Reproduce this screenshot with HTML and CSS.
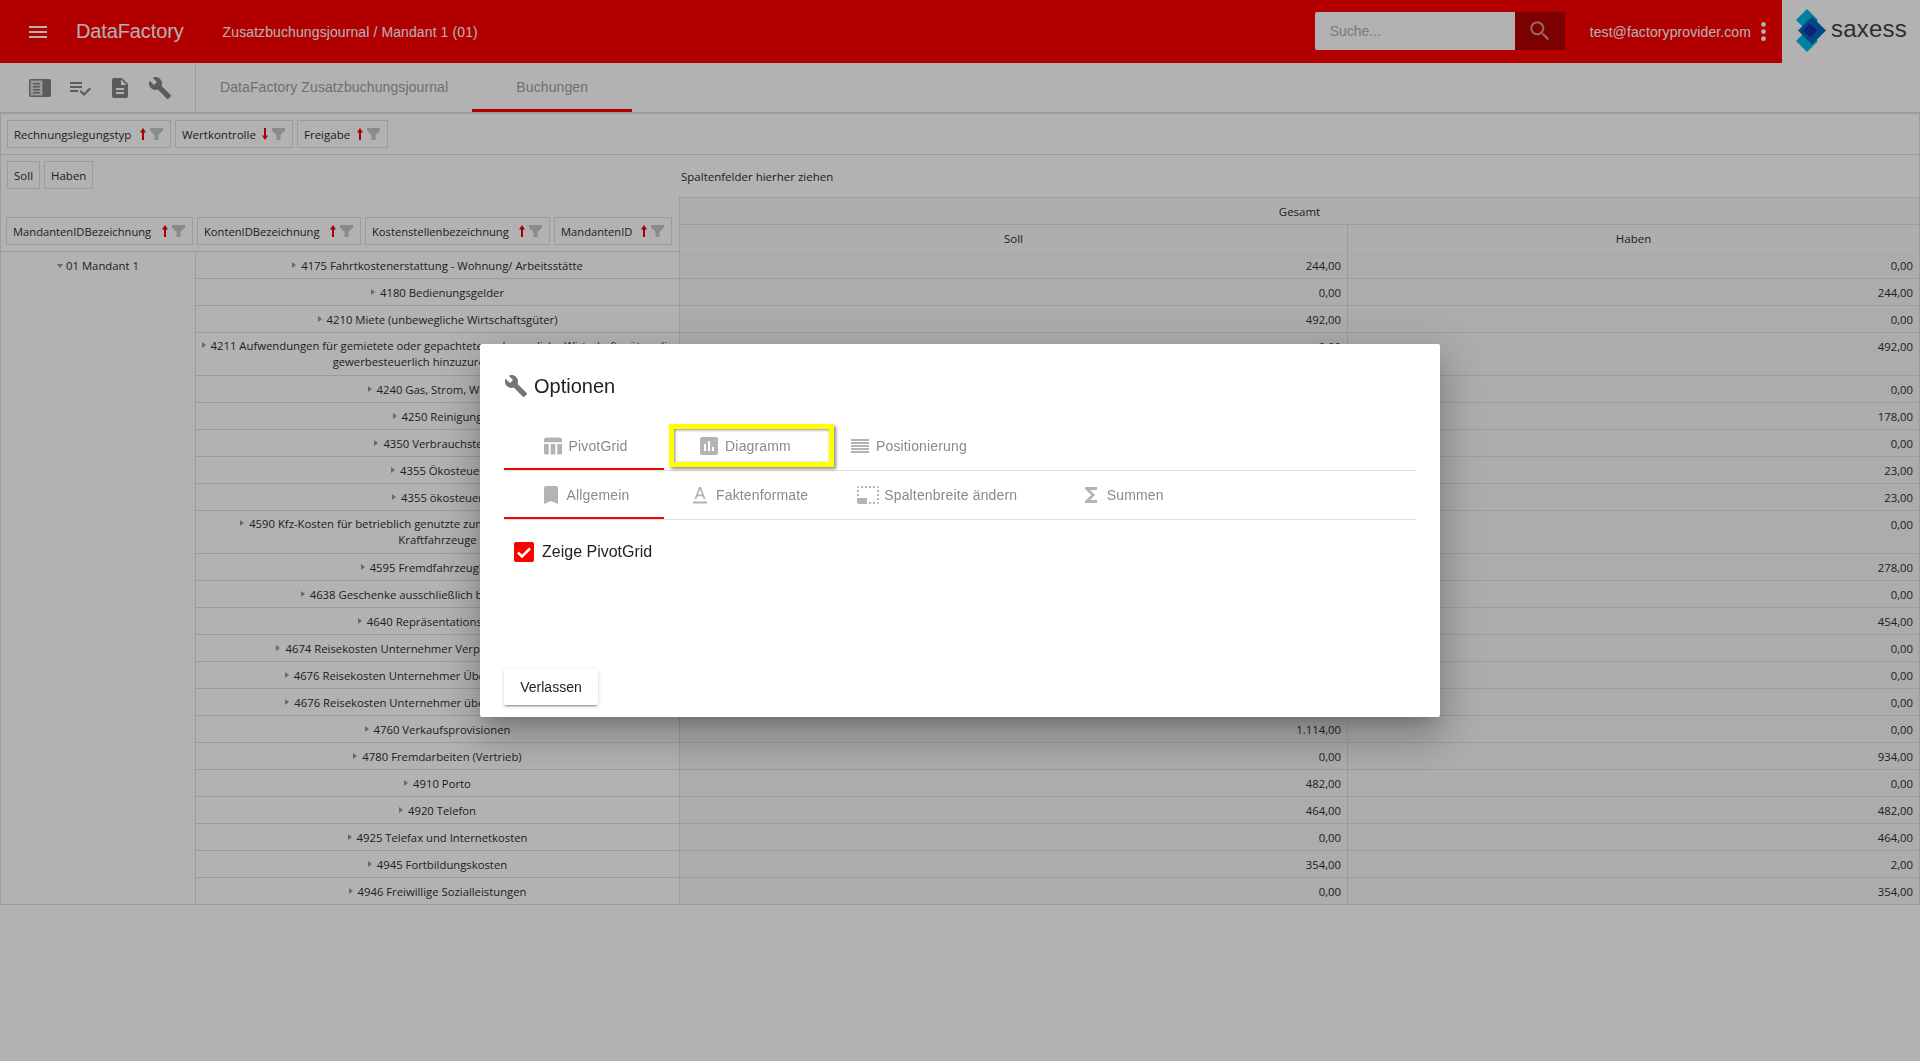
FILE: index.html
```html
<!DOCTYPE html>
<html lang="de">
<head>
<meta charset="utf-8">
<title>DataFactory</title>
<link rel="stylesheet" href="styles.css">
</head>
<body>
<svg class="defs" width="0" height="0" aria-hidden="true">
  <symbol id="up" viewBox="0 0 6 12"><path d="M3 0L6 4.500H4V12H2V4.500H0z"/></symbol>
  <symbol id="down" viewBox="0 0 6 12"><path d="M3 12L6 7.500H4V0H2v7.500H0z"/></symbol>
  <symbol id="funnel" viewBox="0 0 13 12"><path d="M0 0h13v2.500L8.500 7v5h-4V7L0 2.500z"/></symbol>
  <symbol id="wrench" viewBox="0 0 24 24"><path d="M22.7 19l-9.1-9.1c.9-2.3.4-5-1.5-6.9-2-2-5-2.4-7.4-1.3L9 6 6 9 1.6 4.7C.4 7.1.9 10.1 2.900 12.100c1.900 1.900 4.600 2.400 6.900 1.500l9.100 9.100c.4.4 1 .4 1.400 0l2.300-2.300c.5-.4.5-1.100.1-1.400z"/></symbol>
</svg>

<header class="topbar">
  <svg class="menu-icon" viewBox="3 6 18 12"><path d="M3 18h18v-2H3v2zm0-5h18v-2H3v2zm0-7v2h18V6H3z"/></svg>
  <span class="brand">DataFactory</span>
  <span class="crumb">Zusatzbuchungsjournal / Mandant 1 (01)</span>
  <div class="search">
    <span class="search-input">Suche...</span>
    <span class="search-btn"><svg viewBox="0 0 24 24"><path d="M15.5 14h-.79l-.28-.27A6.47 6.47 0 0 0 16 9.5 6.5 6.5 0 1 0 9.5 16c1.61 0 3.09-.59 4.23-1.57l.27.28v.79l5 4.99L20.49 19l-4.99-5zm-6 0C7.01 14 5 11.99 5 9.5S7.01 5 9.5 5 14 7.01 14 9.5 11.99 14 9.5 14z"/></svg></span>
  </div>
  <span class="user">test@factoryprovider.com</span>
  <svg class="more-icon" viewBox="0 0 4 16"><circle cx="2" cy="2" r="2"/><circle cx="2" cy="8" r="2"/><circle cx="2" cy="14" r="2"/></svg>
  <div class="logo">
    <svg class="logo-mark" viewBox="0 0 30 43">
      <path class="lm-a" d="M11 0l11 11-11 11L0 11z"/>
      <path class="lm-a" d="M11 21l11 11-11 11L0 32z"/>
      <path class="lm-b" d="M16 7.500l14 14-14 14L2 21.500z"/>
      <path class="lm-c" d="M14 14.500l7 7-7 7-7-7z"/>
    </svg>
    <span class="logo-text">saxess</span>
  </div>
</header>

<nav class="toolbar">
  <div class="tool-icons">
    <svg class="ti ti-panel" viewBox="0 0 22 18"><rect width="22" height="18" rx="2"/><rect class="ti-light" x="1.500" y="1.500" width="12" height="15"/><path d="M4 4h7v1.500H4zM4 7h7v1.500H4zM4 10h7v1.500H4zM4 13h7v1.500H4z"/></svg>
    <svg class="ti ti-check" viewBox="2 5 22 16"><path d="M14 10H2v2h12v-2zm0-4H2v2h12V6zM2 16h8v-2H2v2zm19.500-4.500L23 13l-6.990 7-4.510-4.500L13 14l3.010 3 5.490-5.500z"/></svg>
    <svg class="ti ti-doc" viewBox="4 2 16 20"><path d="M14 2H6c-1.100 0-1.990.9-1.990 2L4 20c0 1.100.89 2 1.990 2H18c1.100 0 2-.9 2-2V8l-6-6zm2 16H8v-2h8v2zm0-4H8v-2h8v2zm-3-5V3.500L18.500 9H13z"/></svg>
    <svg class="ti ti-wrench"><use href="#wrench"/></svg>
  </div>
  <div class="page-tabs">
    <span class="page-tab">DataFactory Zusatzbuchungsjournal</span>
    <span class="page-tab is-active">Buchungen</span>
  </div>
</nav>

<main class="pivot">
  <div class="filter-row">
    <span class="chip">Rechnungslegungstyp<svg class="arr"><use href="#up"/></svg><svg class="fun"><use href="#funnel"/></svg></span>
    <span class="chip">Wertkontrolle<svg class="arr"><use href="#down"/></svg><svg class="fun"><use href="#funnel"/></svg></span>
    <span class="chip">Freigabe<svg class="arr"><use href="#up"/></svg><svg class="fun"><use href="#funnel"/></svg></span>
  </div>
  <div class="head">
    <div class="head-left">
      <div class="data-chips">
        <span class="chip">Soll</span>
        <span class="chip">Haben</span>
      </div>
      <div class="row-chips">
        <span class="chip">MandantenIDBezeichnung<svg class="arr"><use href="#up"/></svg><svg class="fun"><use href="#funnel"/></svg></span>
        <span class="chip">KontenIDBezeichnung<svg class="arr"><use href="#up"/></svg><svg class="fun"><use href="#funnel"/></svg></span>
        <span class="chip">Kostenstellenbezeichnung<svg class="arr"><use href="#up"/></svg><svg class="fun"><use href="#funnel"/></svg></span>
        <span class="chip">MandantenID<svg class="arr"><use href="#up"/></svg><svg class="fun"><use href="#funnel"/></svg></span>
      </div>
    </div>
    <div class="head-right">
      <div class="drop-hint">Spaltenfelder hierher ziehen</div>
      <div class="col-total">Gesamt</div>
      <div class="col-fields"><div class="col-soll">Soll</div><div class="col-haben">Haben</div></div>
    </div>
  </div>
  <div class="grid">
    <div class="mandant"><i class="tri-down"></i>01 Mandant 1</div>

    <div class="acc"><i class="tri"></i>4175 Fahrtkostenerstattung - Wohnung/ Arbeitsstätte</div><div class="num">244,00</div><div class="num">0,00</div>
    <div class="acc"><i class="tri"></i>4180 Bedienungsgelder</div><div class="num">0,00</div><div class="num">244,00</div>
    <div class="acc"><i class="tri"></i>4210 Miete (unbewegliche Wirtschaftsgüter)</div><div class="num">492,00</div><div class="num">0,00</div>
    <div class="acc is-tall"><i class="tri"></i>4211 Aufwendungen für gemietete oder gepachtete, unbewegliche Wirtschaftsgüter, die gewerbesteuerlich hinzuzurechnen sind</div><div class="num">0,00</div><div class="num">492,00</div>
    <div class="acc"><i class="tri"></i>4240 Gas, Strom, Wasser</div><div class="num">178,00</div><div class="num">0,00</div>
    <div class="acc"><i class="tri"></i>4250 Reinigung</div><div class="num">0,00</div><div class="num">178,00</div>
    <div class="acc"><i class="tri"></i>4350 Verbrauchsteuer</div><div class="num">23,00</div><div class="num">0,00</div>
    <div class="acc"><i class="tri"></i>4355 Ökosteuer</div><div class="num">0,00</div><div class="num">23,00</div>
    <div class="acc"><i class="tri"></i>4355 ökosteuer</div><div class="num">0,00</div><div class="num">23,00</div>
    <div class="acc is-tall"><i class="tri"></i>4590 Kfz-Kosten für betrieblich genutzte zum Betriebsvermögen gehörige<br>Kraftfahrzeuge</div><div class="num">278,00</div><div class="num">0,00</div>
    <div class="acc"><i class="tri"></i>4595 Fremdfahrzeugkosten</div><div class="num">0,00</div><div class="num">278,00</div>
    <div class="acc"><i class="tri"></i>4638 Geschenke ausschließlich betrieblich genutzt</div><div class="num">454,00</div><div class="num">0,00</div>
    <div class="acc"><i class="tri"></i>4640 Repräsentationskosten</div><div class="num">0,00</div><div class="num">454,00</div>
    <div class="acc"><i class="tri"></i>4674 Reisekosten Unternehmer Verpflegungsmehraufwand</div><div class="num">0,00</div><div class="num">0,00</div>
    <div class="acc"><i class="tri"></i>4676 Reisekosten Unternehmer Übernachtungsaufwand</div><div class="num">0,00</div><div class="num">0,00</div>
    <div class="acc"><i class="tri"></i>4676 Reisekosten Unternehmer übernachtungsaufwand</div><div class="num">0,00</div><div class="num">0,00</div>
    <div class="acc"><i class="tri"></i>4760 Verkaufsprovisionen</div><div class="num">1.114,00</div><div class="num">0,00</div>
    <div class="acc"><i class="tri"></i>4780 Fremdarbeiten (Vertrieb)</div><div class="num">0,00</div><div class="num">934,00</div>
    <div class="acc"><i class="tri"></i>4910 Porto</div><div class="num">482,00</div><div class="num">0,00</div>
    <div class="acc"><i class="tri"></i>4920 Telefon</div><div class="num">464,00</div><div class="num">482,00</div>
    <div class="acc"><i class="tri"></i>4925 Telefax und Internetkosten</div><div class="num">0,00</div><div class="num">464,00</div>
    <div class="acc"><i class="tri"></i>4945 Fortbildungskosten</div><div class="num">354,00</div><div class="num">2,00</div>
    <div class="acc"><i class="tri"></i>4946 Freiwillige Sozialleistungen</div><div class="num">0,00</div><div class="num">354,00</div>
  </div>
</main>

<div class="backdrop">
  <section class="dialog">
    <h2 class="dialog-title"><svg class="title-icon"><use href="#wrench"/></svg>Optionen</h2>
    <div class="tabs">
      <div class="tab is-on">
        <svg class="tab-icon" viewBox="0 0 19 18"><path d="M0 3a3 3 0 0 1 3-3h13a3 3 0 0 1 3 3v2H0zM0 7h5v11H2a2 2 0 0 1-2-2zM7 7h5v11H7zM14 7h5v9a2 2 0 0 1-2 2h-3z"/></svg>PivotGrid
      </div>
      <div class="tab">
        <svg class="tab-icon" viewBox="3 3 18 18"><path d="M19 3H5c-1.100 0-2 .9-2 2v14c0 1.100.9 2 2 2h14c1.100 0 2-.9 2-2V5c0-1.100-.9-2-2-2zM9 17H7v-7h2v7zm4 0h-2V7h2v10zm4 0h-2v-4h2v4z"/></svg>Diagramm
        <span class="highlight"></span>
      </div>
      <div class="tab">
        <svg class="tab-icon tab-icon-lines" viewBox="0 0 18 14"><path d="M0 0h18v2H0zM0 3h18v2H0zM0 6h18v2H0zM0 9h18v2H0zM0 12h18v2H0z"/></svg>Positionierung
      </div>
    </div>
    <div class="tabs">
      <div class="tab is-on">
        <svg class="tab-icon tab-icon-book" viewBox="5 3 14 18"><path d="M17 3H7c-1.100 0-1.990.9-1.990 2L5 21l7-3 7 3V5c0-1.100-.9-2-2-2z"/></svg>Allgemein
      </div>
      <div class="tab">
        <svg class="tab-icon tab-icon-a" viewBox="0 0 14 17"><path d="M0 14.500h14V16.500H0zM6 0L1.500 12h1.900l1-2.800h5.200l1 2.800h1.900L8 0zM5 7.600L7 2.300l2 5.300z"/></svg>Faktenformate
      </div>
      <div class="tab">
        <svg class="tab-icon tab-icon-size" viewBox="1 3 22 18"><path d="M23 15h-2v2h2v-2zm0-4h-2v2h2v-2zm0 8h-2v2c1 0 2-1 2-2zM15 3h-2v2h2V3zm8 4h-2v2h2V7zm-2-4v2h2c0-1-1-2-2-2zM3 21h8v-6H1v4c0 1.100.9 2 2 2zM3 7H1v2h2V7zm12 12h-2v2h2v-2zm4-16h-2v2h2V3zm0 16h-2v2h2v-2zM3 3C2 3 1 4 1 5h2V3zm0 8H1v2h2v-2zm8-8H9v2h2V3zM7 3H5v2h2V3z"/></svg>Spaltenbreite ändern
      </div>
      <div class="tab">
        <svg class="tab-icon tab-icon-sum" viewBox="6 4 12 16"><path d="M18 4H6v2l6.500 6L6 18v2h12v-3h-7l5-5-5-5h7z"/></svg>Summen
      </div>
    </div>
    <label class="check">
      <span class="check-box"><svg viewBox="0 0 20 20"><path d="M4 10.500l4 4 8-8" /></svg></span>Zeige PivotGrid
    </label>
    <button class="leave" type="button">Verlassen</button>
  </section>
</div>
</body>
</html>
```

FILE: styles.css
```css
* { box-sizing: border-box; }
html, body { height: 100%; }
body {
  margin: 0;
  background: #fff;
  color: #2e2e2e;
  font-family: "Open Sans", "Liberation Sans", sans-serif;
  font-size: 11.5px;
  overflow: hidden;
}
.defs { position: absolute; }

/* top bar */
.topbar {
  height: 63px;
  background: #ff0000;
  display: flex;
  align-items: center;
  color: #fff;
  font-family: "Liberation Sans", Arial, sans-serif;
}
.menu-icon { width: 18px; height: 12px; margin-left: 29px; fill: #fff; }
.brand { margin-left: 29px; font-size: 20px; letter-spacing: -.12px; }
.crumb { margin-left: 39px; font-size: 14px; letter-spacing: .1px; }
.search { margin-left: auto; display: flex; height: 38px; margin-bottom: 1px; }
.search-input {
  width: 200px;
  background: #fff;
  border-radius: 2px 0 0 2px;
  color: #b0b0b0;
  font-size: 14px;
  line-height: 39px;
  padding-left: 15px;
}
.search-btn {
  width: 50px;
  background: #b00000;
  border-radius: 0 3px 3px 0;
  display: flex;
  align-items: center;
  justify-content: center;
}
.search-btn svg { width: 26px; height: 26px; fill: #fff; opacity: .55; }
.user { margin-left: 25px; font-size: 14px; letter-spacing: .1px; }
.more-icon { width: 5px; height: 19px; margin: 0 16px 0 10px; fill: #fff; }
.logo {
  width: 138px;
  height: 63px;
  background: #fff;
  display: flex;
  align-items: center;
  padding-left: 14px;
}
.logo-mark { width: 30px; height: 43px; margin-top: -2px; flex: none; }
.lm-a { fill: #00b8e8; }
.lm-b { fill: #0068c0; }
.lm-c { fill: #1c2fa8; }
.logo-text { margin-left: 5px; font-size: 24px; letter-spacing: .2px; color: #444; margin-top: -5px; }

/* toolbar */
.toolbar { height: 51px; display: flex; border-bottom: 2px solid #dedede; }
.tool-icons {
  width: 196px;
  border-right: 1px solid #e0e0e0;
  display: flex;
  align-items: center;
  padding: 0 0 0 29px;
  fill: #838383;
}
.ti { display: block; }
.ti-panel { width: 22px; height: 18px; }
.ti-light { fill: #dcdcdc; }
.ti-check { width: 22px; height: 16px; margin-left: 19px; margin-top: 3px; }
.ti-doc { width: 16px; height: 20px; margin-left: 20px; }
.ti-wrench { width: 24px; height: 24px; margin-left: 20px; }
.page-tabs { display: flex; font-family: "Liberation Sans", Arial, sans-serif; font-size: 14px; letter-spacing: .1px; color: #a0a0a0; }
.page-tab {
  padding: 0 24px;
  min-width: 160px;
  line-height: 48px;
  text-align: center;
  height: 49px;
}
.page-tab.is-active { border-bottom: 3px solid #ff0000; }

/* pivot */
.pivot { border-left: 1px solid #e0e0e0; border-right: 1px solid #e0e0e0; height: 791px; }
.chip {
  display: flex;
  align-items: center;
  height: 28px;
  padding: 0 7px 0 6px;
  border: 1px solid #e0e0e0;
  white-space: nowrap;
}
.arr { width: 6px; height: 12px; margin-left: auto; fill: #f00000; flex: none; }
.fun { width: 13px; height: 12px; margin-left: 4px; fill: #c8c8c8; flex: none; }
.filter-row {
  height: 41px;
  display: grid;
  grid-template-columns: 164px 118px 91px;
  align-content: center;
  gap: 4px;
  padding-left: 6px;
  border-bottom: 1px solid #e0e0e0;
}
.head { display: flex; height: 97px; border-bottom: 1px solid #e0e0e0; }
.head-left {
  width: 678px;
  display: flex;
  flex-direction: column;
  justify-content: space-between;
  padding: 6px 0 6px 5px;
}
.data-chips { display: grid; grid-template-columns: 33px 49px; gap: 4px; padding-left: 1px; }
.row-chips { display: grid; grid-template-columns: 187px 164px 185px 118px; gap: 4px; font-size: 11.2px; }
.head-right { flex: 1; display: flex; flex-direction: column; }
.drop-hint { height: 42px; line-height: 43px; padding-left: 2px; }
.col-total { height: 28px; line-height: 27px; text-align: center; border: solid #e0e0e0; border-width: 1px 0 1px 1px; background: #fafafa; }
.col-fields { flex: 1; display: flex; text-align: center; line-height: 27px; background: #fafafa; border-left: 1px solid #e0e0e0; }
.col-soll { width: 668px; border-right: 1px solid #e0e0e0; }
.col-haben { flex: 1; }

.grid {
  display: grid;
  grid-template-columns: 195px 484px 668px 1fr;
  font-size: 11.3px;
}
.mandant {
  grid-row: span 23;
  border-right: 1px solid #e0e0e0;
  border-bottom: 1px solid #e0e0e0;
  text-align: center;
  padding-top: 5px;
  line-height: 17px;
}
.acc, .num {
  padding: 5px 6px 0;
  line-height: 17px;
  border-bottom: 1px solid #e0e0e0;
  border-right: 1px solid #e0e0e0;
}
.acc { height: 27px; text-align: center; padding-inline: 4px; }
.acc.is-tall { height: 43px; line-height: 16px; }
.num { text-align: right; background: #f6f6f6; }
.num:has(+ .acc), .grid > .num:last-child { border-right: 0; }
.tri, .tri-down { display: inline-block; width: 0; height: 0; vertical-align: 2px; }
.tri { border: 3px solid transparent; border-left: 4px solid #999; border-right: 0; margin-right: 5px; }
.tri-down { border: 3px solid transparent; border-top: 4px solid #999; border-bottom: 0; margin-right: 3px; }

/* dialog */
.backdrop {
  position: fixed;
  inset: 0;
  background: rgba(0, 0, 0, .3);
  display: flex;
  align-items: center;
  justify-content: center;
}
.dialog {
  width: 960px;
  height: 373px;
  background: #fff;
  border-radius: 2px;
  padding: 24px 24px 12px;
  display: flex;
  flex-direction: column;
  font-family: "Liberation Sans", Arial, sans-serif;
  box-shadow: 0 11px 15px -7px rgba(0,0,0,.2), 0 24px 38px 3px rgba(0,0,0,.14), 0 9px 46px 8px rgba(0,0,0,.12);
}
.dialog-title {
  margin: 0 0 18px;
  height: 36px;
  font-size: 20px;
  font-weight: 400;
  color: #222;
  display: flex;
  align-items: center;
}
.title-icon { width: 24px; height: 24px; margin-right: 6px; fill: #757575; }
.tabs { display: flex; height: 49px; border-bottom: 1px solid #e0e0e0; }
.tab {
  position: relative;
  min-width: 160px;
  padding: 0 24px;
  height: 48px;
  display: flex;
  align-items: center;
  justify-content: center;
  font-size: 14px;
  letter-spacing: .15px;
  color: #8a8a8a;
  white-space: nowrap;
}
.tab.is-on { box-shadow: inset 0 -2px 0 #ff0000; }
.tab-icon { width: 18px; height: 18px; margin: 0 7px 0 3px; fill: #b3b3b3; flex: none; }
.tab-icon-lines { height: 14px; }
.tab-icon-book { width: 14px; margin: 0 9px 0 5px; }
.tab-icon-a { width: 14px; height: 17px; margin: 0 9px 0 5px; }
.tab-icon-size { width: 22px; margin: 0 5px 0 1px; }
.tab-icon-sum { width: 12px; height: 16px; margin: 0 10px 0 6px; }
.highlight {
  position: absolute;
  left: 5px;
  top: 2px;
  width: 165px;
  height: 43px;
  border: 5px solid #ffff00;
  box-shadow: 2px 2px 3px rgba(0,0,0,.45), inset 1px 1px 3px rgba(0,0,0,.45);
}
.check {
  display: flex;
  align-items: center;
  margin: 22px 0 0 10px;
  font-size: 16px;
  color: #222;
}
.check-box { width: 20px; height: 20px; border-radius: 2px; background: #ff0000; margin-right: 8px; }
.check-box svg { display: block; fill: none; stroke: #fff; stroke-width: 2.5; }
.leave {
  margin-top: auto;
  width: 94px;
  height: 36px;
  background: #fff;
  border: 0;
  border-radius: 2px;
  font: 14px "Liberation Sans", Arial, sans-serif;
  color: #222;
  box-shadow: 0 3px 1px -2px rgba(0,0,0,.2), 0 2px 2px 0 rgba(0,0,0,.14), 0 1px 5px 0 rgba(0,0,0,.12);
}
```
